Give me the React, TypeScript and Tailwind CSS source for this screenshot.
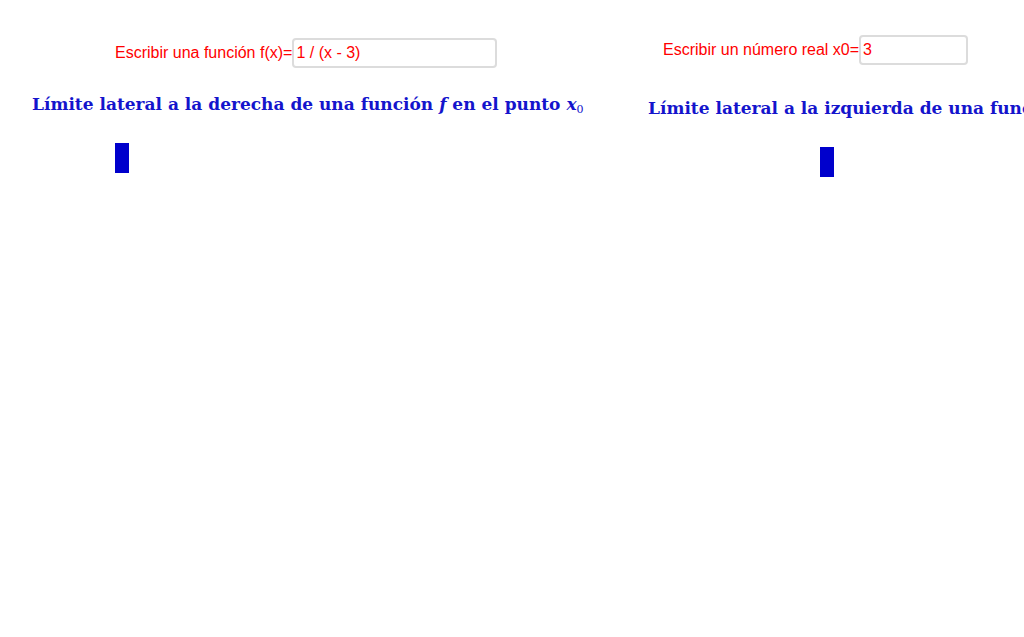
import React from "react";

const InputRow = ({ label, value, width }: { label: string; value: string; width: string }) => (
  <div className="flex items-center text-[16px] text-[#ff0000]" style={{ fontFamily: "'Liberation Sans', Arial, sans-serif" }}>
    <span>{label}</span>
    <div className={`${width} h-[30px] rounded-[4px] border-2 border-[#dcdcdc] bg-white flex items-center pl-[2px]`}>
      <span>{value}</span>
    </div>
  </div>
);

const Heading = ({ children }: { children: React.ReactNode }) => (
  <h2
    className="text-[17px] font-bold text-[#1414cc] whitespace-nowrap leading-none"
    style={{ fontFamily: "'DejaVu Serif', 'Liberation Serif', serif" }}
  >
    {children}
  </h2>
);

export default function App() {
  return (
    <div className="w-[1024px] h-[637px] bg-white overflow-hidden flex">
      {/* Left panel */}
      <div className="w-[616px] shrink-0 flex flex-col pl-[32px]">
        <div className="mt-[38px] ml-[83px]">
          <InputRow label="Escribir una función f(x)=" value="1 / (x - 3)" width="w-[205px]" />
        </div>
        <div className="mt-[28px]">
          <Heading>
            Límite lateral a la derecha de una función <i>f</i> en el punto <i>x</i>
            <sub className="text-[11px] font-normal">0</sub>
          </Heading>
        </div>
        <div className="mt-[30px] ml-[83px] w-[14px] h-[30px] bg-[#0000cc]" />
      </div>

      {/* Right panel */}
      <div className="flex-1 min-w-0 flex flex-col pl-[32px] overflow-hidden">
        <div className="mt-[35px] ml-[15px]">
          <InputRow label="Escribir un número real x0=" value="3" width="w-[109px]" />
        </div>
        <div className="mt-[35px]">
          <Heading>Límite lateral a la izquierda de una función <i>f</i> en el punto <i>x</i></Heading>
        </div>
        <div className="mt-[30px] ml-[172px] w-[14px] h-[30px] bg-[#0000cc]" />
      </div>
    </div>
  );
}
